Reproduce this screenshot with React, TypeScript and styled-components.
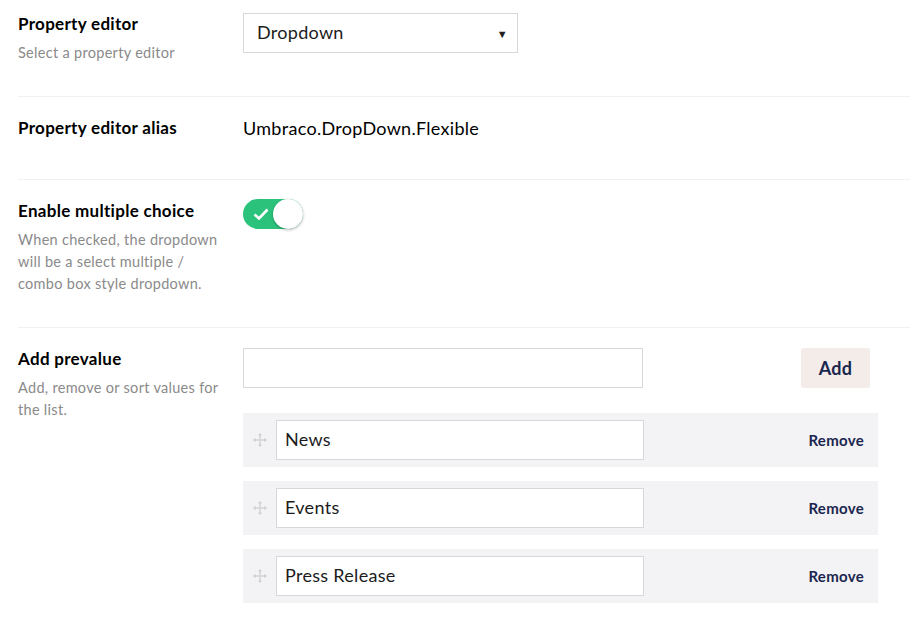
import React, { useState } from 'react';
import styled, { createGlobalStyle } from 'styled-components';

const GlobalStyle = createGlobalStyle`
  html, body {
    margin: 0;
    padding: 0;
    background: #fff;
    font-family: Lato, "Open Sans", sans-serif;
    letter-spacing: 0.3px;
    color: #000;
  }
  * { box-sizing: border-box; }
`;

const Page = styled.div`
  padding: 0 0 0 18px;
  width: 910px;
`;

const Row = styled.div<{ $first?: boolean }>`
  display: flex;
  padding: ${(p) => (p.$first ? '13px' : '20px')} 0 32px;
  border-bottom: 1px solid #f0f0f0;

  &:last-child {
    border-bottom: none;
  }
`;

const LabelCol = styled.div`
  width: 225px;
  flex-shrink: 0;
  padding-right: 14px;
  min-height: 30px;
`;

const Label = styled.div`
  font-size: 17px;
  font-weight: 700;
  line-height: 22px;
  color: #000;
`;

const Description = styled.div`
  margin-top: 7px;
  font-size: 14.5px;
  line-height: 22px;
  color: #8a8a8a;
`;

const Control = styled.div`
  flex: 1;
  padding-right: 32px;
`;

const SelectBox = styled.div`
  width: 275px;
  height: 40px;
  border: 1px solid #d8d7d9;
  display: flex;
  align-items: center;
  justify-content: space-between;
  padding: 0 9px 3px 13px;
  font-size: 18px;
  color: #1b1b1b;
`;

const Caret = styled.span`
  font-size: 11px;
  color: #222;
  padding-top: 3px;
`;

const AliasText = styled.div`
  font-size: 18px;
  line-height: 22px;
  color: #000;
`;

const Toggle = styled.button<{ $on: boolean }>`
  position: relative;
  width: 60px;
  height: 30px;
  margin-top: -1px;
  border: none;
  border-radius: 15px;
  padding: 0;
  background: ${(p) => (p.$on ? '#2bc37c' : '#d8d7d9')};
  cursor: pointer;
  display: flex;
  align-items: center;
`;

const Knob = styled.span<{ $on: boolean }>`
  position: absolute;
  top: 0;
  left: ${(p) => (p.$on ? '30px' : '0')};
  width: 30px;
  height: 30px;
  border-radius: 50%;
  background: #fff;
  box-shadow: 0 1px 3px rgba(0, 0, 0, 0.3);
`;

const Check = styled.svg`
  margin-left: 10px;
`;

const AddLine = styled.div`
  display: flex;
  justify-content: space-between;
  align-items: center;
  margin-bottom: 25px;
`;

const TextInput = styled.input<{ $width: number }>`
  width: ${(p) => p.$width}px;
  height: 40px;
  border: 1px solid #d8d7d9;
  padding: 0 8px 2px;
  font-family: Lato, "Open Sans", sans-serif;
  font-size: 18px;
  letter-spacing: 0.3px;
  color: #1b1b1b;
  background: #fff;
  outline: none;
`;

const AddButton = styled.button`
  width: 69px;
  height: 40px;
  margin-right: 8px;
  border: none;
  border-radius: 3px;
  background: #f3ece8;
  color: #1b264f;
  font-family: Lato, "Open Sans", sans-serif;
  font-size: 18px;
  font-weight: 700;
  letter-spacing: 0.3px;
  cursor: pointer;
`;

const List = styled.div`
  display: flex;
  flex-direction: column;
  gap: 14px;
`;

const Item = styled.div`
  display: flex;
  align-items: center;
  height: 54px;
  padding: 0 14px 0 10px;
  background: #f3f3f5;
`;

const Handle = styled.svg`
  flex-shrink: 0;
  margin-right: 9px;
`;

const RemoveButton = styled.button`
  margin-left: auto;
  border: none;
  background: none;
  padding: 0;
  color: #1b264f;
  font-family: Lato, "Open Sans", sans-serif;
  font-size: 15px;
  font-weight: 700;
  letter-spacing: 0.3px;
  cursor: pointer;
`;

const MoveIcon = () => (
  <Handle width="14" height="14" viewBox="0 0 14 14" fill="#cfcfcf">
    <rect x="6.4" y="2" width="1.2" height="10" />
    <rect x="2" y="6.4" width="10" height="1.2" />
    <polygon points="7,0 9.2,2.6 4.8,2.6" />
    <polygon points="7,14 9.2,11.4 4.8,11.4" />
    <polygon points="0,7 2.6,4.8 2.6,9.2" />
    <polygon points="14,7 11.4,4.8 11.4,9.2" />
  </Handle>
);

const App: React.FC = () => {
  const [multi, setMulti] = useState(true);
  const [values, setValues] = useState(['News', 'Events', 'Press Release']);
  const [draft, setDraft] = useState('');

  const add = (): void => {
    if (draft.trim()) {
      setValues([...values, draft.trim()]);
      setDraft('');
    }
  };

  return (
    <Page>
      <GlobalStyle />
      <Row $first>
        <LabelCol>
          <Label>Property editor</Label>
          <Description>Select a property editor</Description>
        </LabelCol>
        <Control>
          <SelectBox>
            <span>Dropdown</span>
            <Caret>▼</Caret>
          </SelectBox>
        </Control>
      </Row>

      <Row>
        <LabelCol>
          <Label>Property editor alias</Label>
        </LabelCol>
        <Control>
          <AliasText>Umbraco.DropDown.Flexible</AliasText>
        </Control>
      </Row>

      <Row>
        <LabelCol>
          <Label>Enable multiple choice</Label>
          <Description>
            When checked, the dropdown will be a select multiple / combo box style dropdown.
          </Description>
        </LabelCol>
        <Control>
          <Toggle $on={multi} onClick={() => setMulti(!multi)}>
            {multi && (
              <Check width="16" height="12" viewBox="0 0 16 12">
                <path d="M1.5 6.5 L6 10.5 L14.5 1.5" stroke="#fff" strokeWidth="2.6" fill="none" />
              </Check>
            )}
            <Knob $on={multi} />
          </Toggle>
        </Control>
      </Row>

      <Row>
        <LabelCol>
          <Label>Add prevalue</Label>
          <Description>Add, remove or sort values for the list.</Description>
        </LabelCol>
        <Control>
          <AddLine>
            <TextInput $width={400} value={draft} onChange={(e) => setDraft(e.target.value)} />
            <AddButton onClick={add}>Add</AddButton>
          </AddLine>
          <List>
            {values.map((v, i) => (
              <Item key={i}>
                <MoveIcon />
                <TextInput
                  $width={368}
                  value={v}
                  onChange={(e) => setValues(values.map((x, j) => (j === i ? e.target.value : x)))}
                />
                <RemoveButton onClick={() => setValues(values.filter((_, j) => j !== i))}>
                  Remove
                </RemoveButton>
              </Item>
            ))}
          </List>
        </Control>
      </Row>
    </Page>
  );
};

export default App;
